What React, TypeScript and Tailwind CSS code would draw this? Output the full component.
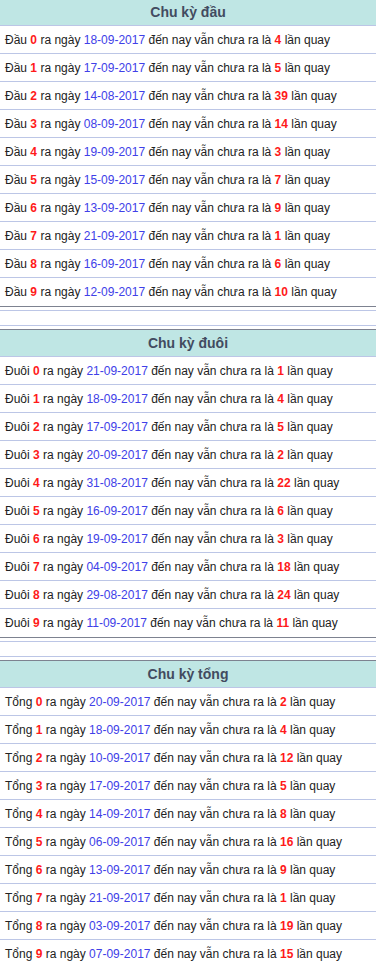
const sections = [
  {
    title: "Chu kỳ đầu",
    label: "Đầu",
    rows: [
      ["18-09-2017", "4"],
      ["17-09-2017", "5"],
      ["14-08-2017", "39"],
      ["08-09-2017", "14"],
      ["19-09-2017", "3"],
      ["15-09-2017", "7"],
      ["13-09-2017", "9"],
      ["21-09-2017", "1"],
      ["16-09-2017", "6"],
      ["12-09-2017", "10"],
    ],
  },
  {
    title: "Chu kỳ đuôi",
    label: "Đuôi",
    rows: [
      ["21-09-2017", "1"],
      ["18-09-2017", "4"],
      ["17-09-2017", "5"],
      ["20-09-2017", "2"],
      ["31-08-2017", "22"],
      ["16-09-2017", "6"],
      ["19-09-2017", "3"],
      ["04-09-2017", "18"],
      ["29-08-2017", "24"],
      ["11-09-2017", "11"],
    ],
  },
  {
    title: "Chu kỳ tổng",
    label: "Tổng",
    rows: [
      ["20-09-2017", "2"],
      ["18-09-2017", "4"],
      ["10-09-2017", "12"],
      ["17-09-2017", "5"],
      ["14-09-2017", "8"],
      ["06-09-2017", "16"],
      ["13-09-2017", "9"],
      ["21-09-2017", "1"],
      ["03-09-2017", "19"],
      ["07-09-2017", "15"],
    ],
  },
];

function CycleTable({ title, label, rows }: { title: string; label: string; rows: string[][] }) {
  return (
    <div className="border-y border-[#7d8290]">
      <div className="h-[27px] flex items-center justify-center bg-[#bfe6e4] border-b border-[#bcc6e6] text-[14px] font-bold text-[#424b60]">
        {title}
      </div>
      {rows.map(([date, count], i) => (
        <div
          key={i}
          className={`h-[28px] flex items-center pl-[5px] text-[12px] text-[#222] whitespace-nowrap ${i < rows.length - 1 ? "border-b border-[#bcc6e6]" : "h-[27px]"}`}
        >
          <span>
            {label} <b className="text-[#ff1a1a]">{i}</b> ra ngày{" "}
            <span className="text-[#4040e8]">{date}</span> đến nay vẫn chưa ra là{" "}
            <b className="text-[#ff1a1a]">{count}</b> lần quay
          </span>
        </div>
      ))}
    </div>
  );
}

export default function App() {
  return (
    <div className="w-[376px] bg-white -mt-[2px] font-['Liberation_Sans',Arial,sans-serif]">
      {sections.map((s, i) => (
        <div key={s.title}>
          {i > 0 && <div className="my-[3px] h-[16px] border-y border-[#bcc6e6]" />}
          <CycleTable title={s.title} label={s.label} rows={s.rows} />
        </div>
      ))}
    </div>
  );
}
